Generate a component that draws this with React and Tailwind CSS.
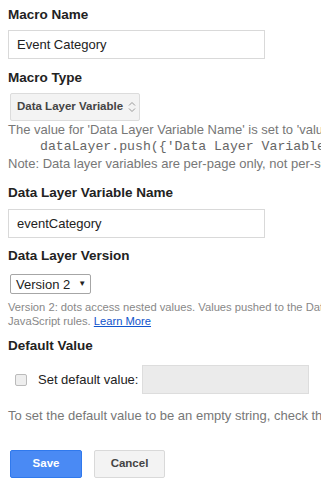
import React from "react";

const Heading = ({ children, className = "" }) => (
    <h3 className={`text-[13.5px] font-bold text-[#222] leading-[15px] ${className}`}>{children}</h3>
);

const App = () => {
    return (
        <div
            className="w-[321px] h-[492px] overflow-hidden bg-white px-2 pt-[7px] text-[#222]"
            style={{ fontFamily: '"Liberation Sans", Arial, sans-serif' }}
        >
            <Heading>Macro Name</Heading>
            <input
                type="text"
                defaultValue="Event Category"
                className="mt-[8px] block w-[257px] h-[29px] border border-[#d9d9d9] px-[8px] text-[13px] text-[#222] outline-none"
            />

            <Heading className="mt-[11px]">Macro Type</Heading>
            <div className="mt-[8px] ml-[2px] flex items-center w-[130px] h-[28px] border border-[#dcdcdc] rounded-[2px] bg-[#f3f3f3] pl-[6px]">
                <span className="text-[11.5px] font-bold text-[#444] whitespace-nowrap">Data Layer Variable</span>
                <svg width="8" height="12" viewBox="0 0 8 12" className="ml-[5px] shrink-0">
                    <path d="M1 4.5 L4 1.5 L7 4.5 M1 7.5 L4 10.5 L7 7.5" fill="none" stroke="#999" strokeWidth="1" />
                </svg>
            </div>

            <div className="text-[13px] leading-[17px] text-[#777] whitespace-nowrap">
                <p>The value for 'Data Layer Variable Name' is set to 'value' when code on your site executes:</p>
                <p className="pl-[32px] text-[13.2px] text-[#666]" style={{ fontFamily: '"Liberation Mono", "Courier New", monospace' }}>
                    dataLayer.push({"{"}'Data Layer Variable Name': 'value'{"}"})
                </p>
                <p>Note: Data layer variables are per-page only, not per-session.</p>
            </div>

            <Heading className="mt-[13px]">Data Layer Variable Name</Heading>
            <input
                type="text"
                defaultValue="eventCategory"
                className="mt-[9px] block w-[257px] h-[29px] border border-[#d9d9d9] px-[8px] text-[13px] text-[#222] outline-none"
            />

            <Heading className="mt-[10px]">Data Layer Version</Heading>
            <div className="mt-[11px] ml-[2px] flex items-center w-[81px] h-[20px] border border-[#a6a6a6] rounded-[2px] bg-white pl-[5px] whitespace-nowrap">
                <span className="text-[13px] text-[#222] leading-none">Version 2</span>
                <span className="ml-[8px] text-[8px] text-[#222] leading-none">▼</span>
            </div>
            <p className="mt-[6px] text-[11.2px] leading-[14px] text-[#888] whitespace-nowrap">
                Version 2: dots access nested values. Values pushed to the Data Layer are merged.
                <br />
                JavaScript rules. <a className="text-[#15c] underline">Learn More</a>
            </p>

            <Heading className="mt-[10px]">Default Value</Heading>
            <div className="mt-[12px] flex items-center whitespace-nowrap">
                <span className="ml-[7px] shrink-0 w-[12px] h-[12px] rounded-[2px] border border-[#bbb] bg-[#eee]" />
                <span className="ml-[11px] text-[13px] text-[#222]">Set default value:</span>
                <span className="ml-[4px] shrink-0 w-[167px] h-[29px] border border-[#ddd] bg-[#ebebeb]" />
            </div>
            <p className="mt-[12px] text-[13px] text-[#777] whitespace-nowrap">
                To set the default value to be an empty string, check the box and leave the field blank.
            </p>

            <div className="mt-[24px] flex ml-[2px] gap-[12px]">
                <button className="w-[72px] h-[28px] rounded-[2px] bg-[#4a8af4] border border-[#3079ed] text-white text-[11.5px] font-bold">
                    Save
                </button>
                <button className="w-[71px] h-[28px] rounded-[2px] bg-[#f3f3f3] border border-[#d9d9d9] text-[#444] text-[11.5px] font-bold">
                    Cancel
                </button>
            </div>
        </div>
    );
};

export default App;
